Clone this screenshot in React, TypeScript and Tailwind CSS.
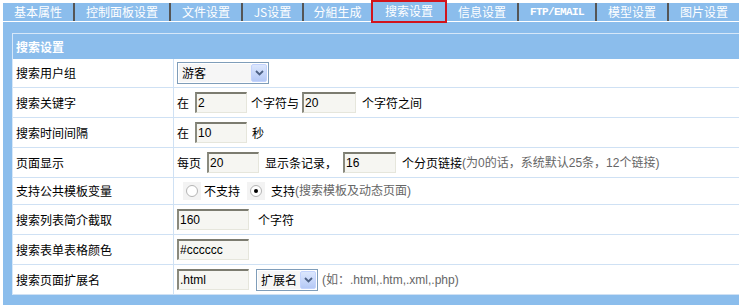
import { FC, ReactNode } from "react";

const tabs = [
  { text: "基本属性", cls: "w-[70px]" },
  { text: "控制面板设置", cls: "w-[96px] border-l-2 border-[#555]" },
  { text: "文件设置", cls: "w-[72px] border-l-2 border-[#555]" },
  { text: "JS设置", cls: "w-[61px] border-l-2 border-[#555]" },
  { text: "分組生成", cls: "w-[69px] border-l-2 border-[#555]" },
  { text: "搜索设置", cls: "w-[76px]", active: true },
  { text: "信息设置", cls: "w-[70px]" },
  { text: "FTP/EMAIL", cls: "w-[78px] border-l-2 border-[#555] font-['Liberation_Mono'] text-[11px] tracking-[-0.6px] font-bold" },
  { text: "模型设置", cls: "w-[72px] border-l-2 border-[#555]" },
  { text: "图片设置", cls: "w-[72px] border-l-2 border-[#555]" },
];

const Input: FC<{ value: string; w: string }> = ({ value, w }) => (
  <input
    readOnly
    value={value}
    className={`${w} h-[21px] shrink-0 border-t-2 border-l-2 border-b border-r border-t-[#7c7c70] border-l-[#8a8a7e] border-b-[#e6e6dc] border-r-[#e6e6dc] bg-[#f6f6f2] pl-[1px] font-['Liberation_Sans',sans-serif] text-[12px] text-black outline-none`}
  />
);

const Chevron: FC = () => (
  <svg width="9" height="6" viewBox="0 0 9 6">
    <polyline points="1,1 4.5,4.5 8,1" fill="none" stroke="#4d6185" strokeWidth="1.8" />
  </svg>
);

const Select: FC<{ text: string; w: string; h: string }> = ({ text, w, h }) => (
  <div className={`${w} ${h} shrink-0 flex items-center border border-[#7f9db9] bg-white p-[1px]`}>
    <div className="flex-1 h-full flex items-center pl-[3px] bg-[#f6f6f6]">{text}</div>
    <div className="w-[16px] h-full flex items-center justify-center rounded-[2px] border border-[#c3d3fd] bg-gradient-to-b from-[#dce7fd] to-[#b5c9f6]">
      <Chevron />
    </div>
  </div>
);

const Radio: FC<{ checked?: boolean }> = ({ checked }) => (
  <span className="w-[18px] h-[18px] shrink-0 flex items-center justify-center bg-[#f3f3f3]">
    <span className="w-[12px] h-[12px] rounded-full border border-[#b4b4b4] bg-white flex items-center justify-center">
      {checked && <span className="w-[4px] h-[4px] rounded-full bg-black" />}
    </span>
  </span>
);

const Hint: FC<{ children: ReactNode; cls?: string }> = ({ children, cls = "" }) => (
  <span className={`${cls} text-[#666] font-['Liberation_Sans','Noto_Sans_CJK_SC',sans-serif] whitespace-nowrap`}>{children}</span>
);

const Row: FC<{ label: string; h: string; children: ReactNode }> = ({ label, h, children }) => (
  <div className={`flex ${h} border-b border-[#cfe1f4]`}>
    <div className="w-[160px] shrink-0 flex items-center pl-[3px]">{label}</div>
    <div className="flex-1 flex items-center pl-[3px] border-l border-[#cfe1f4] whitespace-nowrap">{children}</div>
  </div>
);

export default function App() {
  return (
    <div className="w-[739px] h-[305px] overflow-hidden bg-white pl-[3px] text-[12px] leading-[14px] text-black font-['Noto_Sans_CJK_SC',sans-serif]">
      {/* tabs */}
      <div className="flex h-[22px] items-start">
        {tabs.map((t) =>
          t.active ? (
            <div
              key={t.text}
              className={`${t.cls} relative z-10 h-[23px] shrink-0 flex justify-center pt-[2px] border-2 border-[#d2141c] bg-[#8bbdec] text-white`}
            >
              {t.text}
            </div>
          ) : (
            <div
              key={t.text}
              className={`${t.cls} mt-[3px] h-[18px] shrink-0 flex items-center justify-center bg-[#8bbdec] text-white`}
            >
              {t.text}
            </div>
          )
        )}
      </div>

      {/* panel */}
      <div className="h-[283px] bg-[#8bbdec] pt-[11px]">
        <div className="w-[740px] ml-[9px] border-t border-l border-[#d6e7f8] bg-white">
          <div className="h-[25px] flex items-center pl-[3px] bg-[#8bbdec] text-white font-bold">搜索设置</div>

          <Row label="搜索用户组" h="h-[29px]">
            <Select text="游客" w="w-[92px]" h="h-[22px]" />
          </Row>

          <Row label="搜索关键字" h="h-[30px]">
            <span>在</span>
            <span className="ml-[6px]"><Input value="2" w="w-[52px]" /></span>
            <span className="ml-[4px]">个字符与</span>
            <span className="ml-[3px]"><Input value="20" w="w-[54px]" /></span>
            <span className="ml-[6px]">个字符之间</span>
          </Row>

          <Row label="搜索时间间隔" h="h-[30px]">
            <span>在</span>
            <span className="ml-[6px]"><Input value="10" w="w-[52px]" /></span>
            <span className="ml-[5px]">秒</span>
          </Row>

          <Row label="页面显示" h="h-[30px]">
            <span>每页</span>
            <span className="ml-[6px]"><Input value="20" w="w-[52px]" /></span>
            <span className="ml-[6px]">显示条记录，</span>
            <span className="ml-[6px]"><Input value="16" w="w-[53px]" /></span>
            <span className="ml-[6px]">个分页链接</span>
            <Hint>(为0的话，系统默认25条，12个链接)</Hint>
          </Row>

          <Row label="支持公共模板变量" h="h-[27px]">
            <span className="ml-[6px]"><Radio /></span>
            <span className="ml-[3px]">不支持</span>
            <span className="ml-[7px]"><Radio checked /></span>
            <span className="ml-[6px]">支持</span>
            <Hint>(搜索模板及动态页面)</Hint>
          </Row>

          <Row label="搜索列表简介截取" h="h-[30px]">
            <Input value="160" w="w-[72px]" />
            <span className="ml-[9px]">个字符</span>
          </Row>

          <Row label="搜索表单表格颜色" h="h-[30px]">
            <Input value="#cccccc" w="w-[72px]" />
          </Row>

          <Row label="搜索页面扩展名" h="h-[30px]">
            <Input value=".html" w="w-[72px]" />
            <span className="ml-[7px]"><Select text="扩展名" w="w-[62px]" h="h-[22px]" /></span>
            <Hint cls="ml-[4px]">(如：.html,.htm,.xml,.php)</Hint>
          </Row>
        </div>
      </div>
    </div>
  );
}
